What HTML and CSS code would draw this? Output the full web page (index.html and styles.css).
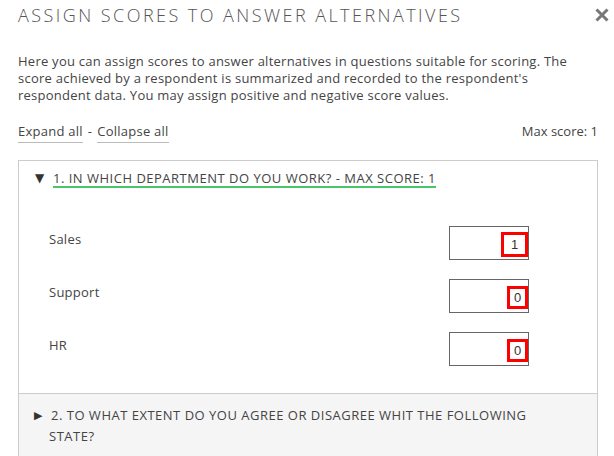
FILE: index.html
```html
<!DOCTYPE html>
<html lang="en">
<head>
<meta charset="utf-8">
<title>Assign scores</title>
<link rel="stylesheet" href="styles.css">
</head>
<body>
<div class="modal">
  <header class="modal-head">
    <h1 class="title">ASSIGN SCORES TO ANSWER ALTERNATIVES</h1>
    <button class="close" aria-label="Close">
      <svg width="14" height="14" viewBox="0 0 14 14"><path d="M1.5 1.5 L12.5 12.5 M12.5 1.5 L1.5 12.5" stroke="#777" stroke-width="3" stroke-linecap="butt"/></svg>
    </button>
  </header>
  <p class="intro">Here you can assign scores to answer alternatives in questions suitable for scoring. The score achieved by a respondent is summarized and recorded to the respondent's respondent data. You may assign positive and negative score values.</p>
  <div class="toolbar">
    <div class="links"><a class="link">Expand all</a><span class="sep">-</span><a class="link">Collapse all</a></div>
    <div class="max">Max score: 1</div>
  </div>
  <div class="panel">
    <div class="q-head open">
      <span class="caret">&#9660;</span>
      <span class="q-title underlined">1. IN WHICH DEPARTMENT DO YOU WORK? - MAX SCORE: 1</span>
    </div>
    <div class="q-body">
      <div class="row">
        <span class="label">Sales</span>
        <div class="score"><span class="mark mark-wide">1</span></div>
      </div>
      <div class="row">
        <span class="label">Support</span>
        <div class="score"><span class="mark">0</span></div>
      </div>
      <div class="row">
        <span class="label">HR</span>
        <div class="score"><span class="mark">0</span></div>
      </div>
    </div>
    <div class="q-head closed">
      <span class="caret small">&#9654;</span>
      <span class="q-title wrap">2. TO WHAT EXTENT DO YOU AGREE OR DISAGREE WHIT THE FOLLOWING STATE?</span>
    </div>
  </div>
</div>
</body>
</html>
```

FILE: styles.css
```css
html, body {
  margin: 0;
  padding: 0;
  background: #fff;
}
body {
  font-family: "Open Sans", "Liberation Sans", sans-serif;
  color: #444;
  letter-spacing: 0.25px;
  overflow: hidden;
}
.modal {
  padding: 0 16px 0 18px;
}
.modal-head {
  display: flex;
  justify-content: space-between;
  align-items: flex-start;
  padding-top: 3px;
}
.title {
  margin: 0;
  font-family: "Open Sans", sans-serif;
  font-size: 18px;
  line-height: 24px;
  font-weight: 300;
  letter-spacing: 2.45px;
  color: #555;
  white-space: nowrap;
}
.close {
  border: 0;
  background: none;
  padding: 0;
  margin: 5px -11px 0 0;
  width: 14px;
  height: 14px;
  display: block;
  flex: none;
}
.close svg { display: block; }
.intro {
  margin: 26px 0 0;
  font-size: 13px;
  line-height: 17px;
  color: #444;
}
.toolbar {
  display: flex;
  justify-content: space-between;
  align-items: baseline;
  margin-top: 19px;
  font-size: 13px;
  line-height: 17px;
}
.links { display: flex; align-items: baseline; }
.link {
  color: #444;
  border-bottom: 1px solid #bbb;
  padding-bottom: 2px;
}
.sep { margin: 0 5px; }
.max { color: #444; letter-spacing: 0; }
.panel {
  margin-top: 17px;
  border: 1px solid #ccc;
}
.q-head {
  display: flex;
  align-items: flex-start;
  font-size: 13px;
  line-height: 21px;
  letter-spacing: 0.5px;
  color: #444;
}
.q-head.open {
  padding: 10px 16px 9px 16px;
}
.caret {
  width: 18px;
  flex: none;
  font-size: 12px;
  color: #333;
  letter-spacing: 0;
  font-family: "DejaVu Sans", sans-serif;
}
.q-head.open .caret { line-height: 15px; }
.caret.small { width: 15px; font-size: 11px; }
.q-title.underlined {
  border-bottom: 2px solid #4cc46a;
  line-height: 15px;
  padding-bottom: 0;
}
.q-body {
  padding: 29px 68px 27px 30px;
}
.row {
  display: flex;
  justify-content: space-between;
  align-items: flex-start;
}
.row + .row { margin-top: 19px; }
.label {
  font-size: 13px;
  line-height: 17px;
  padding-top: 5px;
}
.score {
  width: 78px;
  height: 32px;
  border: 1px solid #666;
  display: flex;
  justify-content: flex-end;
  align-items: center;
  font-family: "Liberation Sans", Arial, sans-serif;
  font-size: 13px;
  letter-spacing: 0;
  color: #333;
}
.mark {
  border: 3px solid #f00;
  height: 17px;
  line-height: 17px;
  width: 15px;
  text-align: center;
  margin-top: 2px;
}
.mark.mark-wide {
  width: 21px;
  height: 19px;
  line-height: 19px;
  text-align: center;
}
.q-head.closed {
  background: #f5f5f5;
  border-top: 1px solid #ccc;
  padding: 11px 50px 14px 15px;
}
.q-title.wrap {
  line-height: 21px;
  text-indent: 2px;
}
```
